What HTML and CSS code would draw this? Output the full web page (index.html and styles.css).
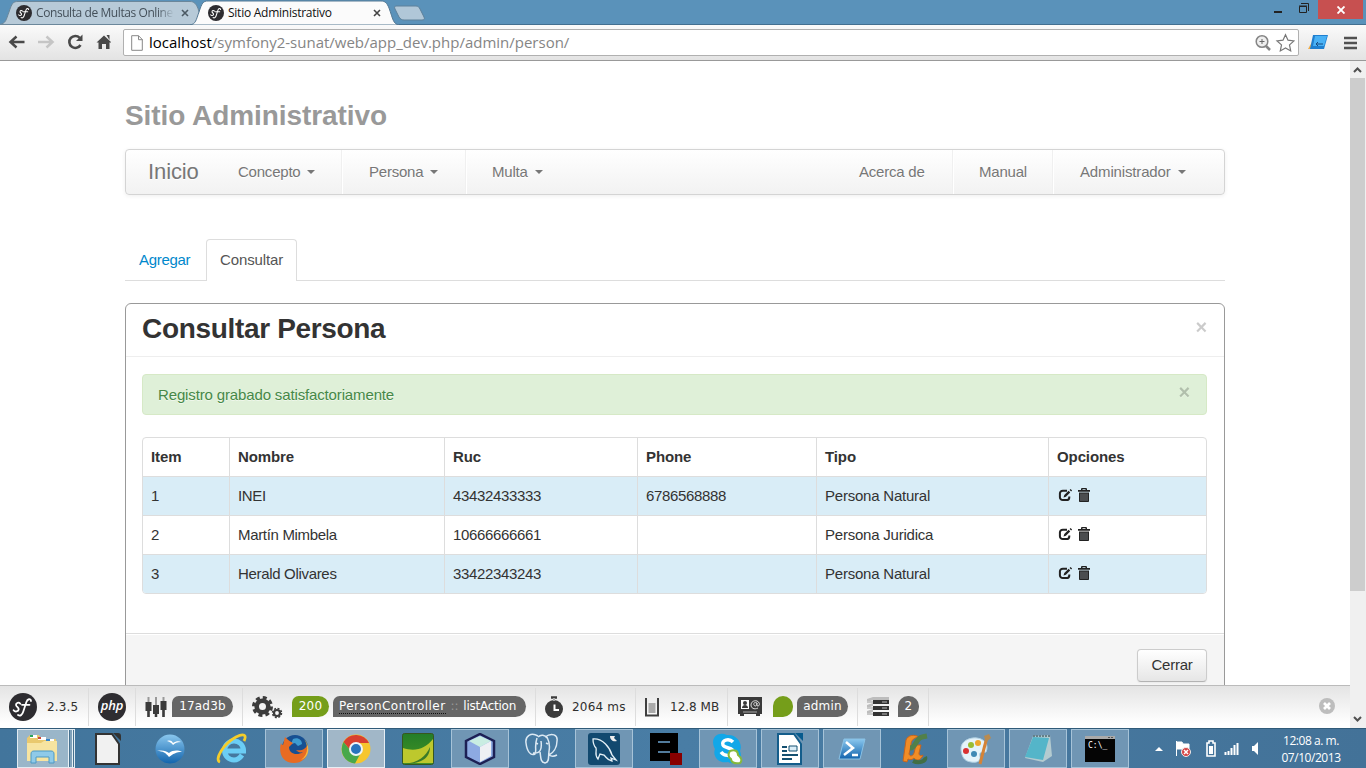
FILE: index.html
```html
<!DOCTYPE html>
<html lang="es">
<head>
<meta charset="utf-8">
<title>Sitio Administrativo</title>
<link rel="stylesheet" href="styles.css">
</head>
<body>
<svg width="0" height="0" class="defs">
  <defs>
    <g id="sf"><circle cx="14" cy="14" r="14" fill="#2d2c30"/><path d="M11.300 10.800C9.800 8.800 6.800 9.800 7 12c.2 2 3.100 2.300 2.700 4.500-.4 2.300-3.700 2.700-5.100.7M22 8c-.4-2.800-3.500-2.200-4.600 1l-3.200 9.800c-1 3.200-3 4.600-5.200 3.200M13 11.800h7.500" fill="none" stroke="#fff" stroke-width="1.800" stroke-linecap="round"/></g>
    <g id="edit"><path d="M9 2.700H4.800A2.900 2.900 0 0 0 1.900 5.600v3.600a2.900 2.900 0 0 0 2.900 2.900h3.600a2.900 2.900 0 0 0 2.900-2.900V8.500" fill="none" stroke="#222" stroke-width="2"/><path d="M5.500 9.500l.8-2.400L10.600 2.800l1.600 1.600-4.300 4.300zM11.600 1.900l1-1 1.500 1.500-1 1z" fill="#222"/></g>
    <g id="trash"><path d="M3.500 2V1.200C3.500.4 4 0 4.800 0h3.400c.8 0 1.300.4 1.300 1.200V2h3v1.800H.5V2zM5 2h3V1.200H5zM1.500 4.500h10v8.800c0 .5-.3.700-.8.700H2.300c-.5 0-.8-.2-.8-.7z" fill="#222"/><path d="M3.500 5.500v7.500M5.500 5.500v7.500M7.500 5.500v7.500M9.500 5.500v7.500" stroke="#8c9194" stroke-width=".8"/></g>
    <linearGradient id="blue" x2="0" y2="1"><stop stop-color="#8ac7ee"/><stop offset="1" stop-color="#1264ad"/></linearGradient>
    <linearGradient id="green" x2="0" y2="1"><stop stop-color="#247d28"/><stop offset="1" stop-color="#459324"/></linearGradient>
  </defs>
</svg>

<header class="titlebar">
  <svg class="tab-shapes" width="430" height="25" viewBox="0 0 430 25">
    <path d="M0 24.500C6 23 6 20 9 12 12 3 13 1.500 18 1.500H190c4 0 6 2 8 7l5 16z" fill="#b7cad8" stroke="#6b879b"/>
    <path d="M190 25c6-1 6-5 9-13 3-9 4-11 9-11H381c4 0 6 2 8 7 4 11 4 16 10 17z" fill="#fbfbfb" stroke="#547893"/>
    <path d="M396 6h20c2 0 3 1 4 3l4 8c1 2 0 3-2 3h-18c-2 0-4-1-5-3l-4-8c-1-2 0-3 1-3z" fill="#b0c7d8" stroke="#5d809a"/>
  </svg>
  <div class="tabs">
    <div class="tab tab-one"><svg width="16" height="16" viewBox="0 0 28 28"><use href="#sf"/></svg><span>Consulta de Multas Online</span><svg class="tab-x" width="8" height="8"><path d="M1 1l6 6M7 1l-6 6" stroke="#4b5963" stroke-width="1.600"/></svg></div>
    <div class="tab tab-two"><svg width="16" height="16" viewBox="0 0 28 28"><use href="#sf"/></svg><span>Sitio Administrativo</span><svg class="tab-x" width="8" height="8"><path d="M1 1l6 6M7 1l-6 6" stroke="#444" stroke-width="1.600"/></svg></div>
  </div>
  <div class="window-buttons">
    <svg width="44" height="19"><path d="M0 12h8" stroke="#222" stroke-width="2"/><path d="M25.500 6.500h7v6h-7zM27 3.500h7.500V11M25 6h8" fill="none" stroke="#222"/></svg>
    <div class="close"><svg width="8" height="8"><path d="M.5.500l7 7M7.500.500l-7 7" stroke="#fff" stroke-width="1.900"/></svg></div>
  </div>
</header>

<div class="browser-bar">
  <svg class="nav-icons" width="110" height="20" viewBox="0 0 110 20">
    <path d="M25 10H11.500M17 4.500L11 10l6 5.500" fill="none" stroke="#494949" stroke-width="2.500"/>
    <path d="M38.500 10H52M47 4.500L53 10l-6 5.500" fill="none" stroke="#c5c5c5" stroke-width="2.500"/>
    <path d="M81 13a6 6 0 1 1-.8-7.200" fill="none" stroke="#494949" stroke-width="2.600"/><path d="M83 2.500V9h-6.500z" fill="#494949"/>
    <path d="M97 10.500l7.500-7 7.500 7h-2V17h-3.500v-5h-4v5H99v-6.500zM107 3h3v5z" fill="#494949"/>
  </svg>
  <div class="address">
    <svg width="12" height="16"><path d="M.7.700h6.800l3.800 3.800v10.800H.7zM7.500.700v4h4" fill="#fff" stroke="#888"/></svg>
    <span class="url"><b>localhost</b>/symfony2-sunat/web/app_dev.php/admin/person/</span>
    <svg width="40" height="20"><circle cx="7" cy="8.500" r="5.800" fill="#eee" stroke="#858585" stroke-width="1.500"/><path d="M4.500 8.500h5M7 6v5" stroke="#666"/><path d="M11 13l4 4" stroke="#858585" stroke-width="2.500"/><path d="M30.500 1.700l2.500 5.500 6 .7-4.500 4 1.200 6-5.200-3-5.200 3 1.200-6-4.500-4 6-.7z" fill="#fff" stroke="#777" stroke-width="1.200"/></svg>
  </div>
  <svg class="extension" width="20" height="17"><path d="M0 15l4-7 2 7z" fill="#f0ad48"/><path d="M5 1h15l-4 14H2z" fill="#1e7fd0"/><path d="M7 2h12l-3 10H5z" fill="#49b1f5"/><path d="M8 10h7M10 8l-2 2 2 2" fill="none" stroke="#174b80"/></svg>
  <svg class="menu" width="13" height="14"><path d="M0 2h13M0 7h13M0 12h13" stroke="#515151" stroke-width="2.600"/></svg>
</div>

<div class="view">
  <div class="document">
    <main class="page">
      <div class="container">
        <h1>Sitio Administrativo</h1>
        <nav class="navbar">
          <a class="brand">Inicio</a>
          <a class="concept">Concepto <i class="caret"></i></a>
          <a class="person">Persona <i class="caret"></i></a>
          <a class="fine">Multa <i class="caret"></i></a>
          <a class="about">Acerca de</a>
          <a class="manual">Manual</a>
          <a class="account">Administrador <i class="caret"></i></a>
        </nav>
        <div class="page-tabs"><a>Agregar</a><a class="active">Consultar</a></div>
        <section class="modal">
          <div class="modal-header"><h2>Consultar Persona</h2><button class="dismiss">×</button></div>
          <div class="modal-body">
            <div class="alert"><span>Registro grabado satisfactoriamente</span><button class="dismiss">×</button></div>
            <table>
              <colgroup><col class="c1"><col class="c2"><col class="c3"><col class="c4"><col class="c5"><col class="c6"></colgroup>
              <thead><tr><th>Item</th><th>Nombre</th><th>Ruc</th><th>Phone</th><th>Tipo</th><th>Opciones</th></tr></thead>
              <tbody>
                <tr class="info"><td>1</td><td>INEI</td><td class="num">43432433333</td><td class="num">6786568888</td><td>Persona Natural</td><td><svg class="actions" width="34" height="14"><use href="#edit"/><use href="#trash" x="19.500"/></svg></td></tr>
                <tr><td>2</td><td>Martín Mimbela</td><td class="num">10666666661</td><td></td><td>Persona Juridica</td><td><svg class="actions" width="34" height="14"><use href="#edit"/><use href="#trash" x="19.500"/></svg></td></tr>
                <tr class="info"><td>3</td><td>Herald Olivares</td><td class="num">33422343243</td><td></td><td>Persona Natural</td><td><svg class="actions" width="34" height="14"><use href="#edit"/><use href="#trash" x="19.500"/></svg></td></tr>
              </tbody>
            </table>
          </div>
          <div class="modal-footer"><button class="btn">Cerrar</button></div>
        </section>
      </div>
    </main>
    <div class="debug">
      <div class="block b1"><svg width="28" height="28"><use href="#sf"/></svg><span>2.3.5</span></div>
      <div class="block b2"><div class="php">php</div></div>
      <div class="block b3"><svg width="22" height="22"><path d="M3.500 1v20M11 1v20M18.500 1v20" stroke="#999" stroke-width="2"/><path d="M.5 6h6v9h-6zM8 9h6v9H8zM15.500 5h6v9h-6z" fill="#3b3b3b"/><path d="M3.500 14v7M11 17v4M18.500 14v7" stroke="#3b3b3b" stroke-width="2.500"/></svg><span class="pill">17ad3b</span></div>
      <div class="block b4"><svg width="31" height="23"><circle cx="10.500" cy="10.500" r="5.800" fill="none" stroke="#3c3c3c" stroke-width="4.600"/><circle cx="10.500" cy="10.500" r="9" fill="none" stroke="#3c3c3c" stroke-width="3" stroke-dasharray="4 3.070"/><circle cx="25" cy="17" r="3" fill="none" stroke="#3c3c3c" stroke-width="2.200"/><circle cx="25" cy="17" r="4.500" fill="none" stroke="#3c3c3c" stroke-width="1.500" stroke-dasharray="2 1.530"/></svg><span class="pill ok">200</span><span class="pill controller"><u>PersonController</u> <em>::</em> <s>listAction</s></span></div>
      <div class="block b5"><svg width="18" height="22"><circle cx="9" cy="13" r="9" fill="#3c3c3c"/><path d="M6 1.500h6" stroke="#3c3c3c" stroke-width="2.500"/><path d="M9 2v3" stroke="#aaa" stroke-width="2"/><path d="M9.500 8.500v5.500h4.500" stroke="#fff" stroke-width="2" fill="none"/></svg><span>2064 ms</span></div>
      <div class="block b6"><svg width="14" height="20"><path d="M1 1v17.500h12V1" fill="none" stroke="#404040" stroke-width="2"/><path d="M3.500 6h7v10h-7z" fill="#aaa"/></svg><span>12.8 MB</span></div>
      <div class="block b7"><svg width="24" height="20"><path d="M0 0h24v17h-2v2h-4v-2H6v2H2v-2H0z" fill="#3a3a3a"/><path d="M3 3h8v9H3z" fill="#fff"/><circle cx="7" cy="6" r="2" fill="#3a3a3a"/><path d="M4 11c0-4 6-4 6 0" fill="#3a3a3a"/><path d="M20 11c-4 2-7 0-7-3s3-5 6-4c3 1 3 5 1 5s-1-2-1-3c-2-1-4 0-3 2s3 1 3-2" fill="none" stroke="#ddd"/><path d="M5 15h14" stroke="#aaa"/></svg><span class="pill ok empty"></span><span class="pill admin">admin</span></div>
      <div class="block b8"><svg width="22" height="20"><path d="M0 2l6-2h16v3H6L0 5zM0 8l6-2v3l-6 2zM0 14l6-2v3l-6 2z" fill="#bdbdbd"/><path d="M6 3h16v4H6zM6 9h16v4H6zM6 15h16v4H6z" fill="#333"/><path d="M0 4h6v2H0zM0 10h6v2H0zM0 16h6v2H0z" fill="#c8c8c8"/><path d="M15 5h5M15 11h5M15 17h5" stroke="#bbb"/></svg><span class="pill count">2</span></div>
      <svg class="debug-close" width="16" height="16"><circle cx="8" cy="8" r="8" fill="#bdbdbd"/><path d="M5 5l6 6M11 5l-6 6" stroke="#fff" stroke-width="2.700"/></svg>
    </div>
  </div>
  <div class="scrollbar">
    <svg width="16" height="17"><path d="M4 11l3.500-3.500L11 11" fill="none" stroke="#505050" stroke-width="2"/></svg>
    <div class="thumb"></div>
    <svg class="down" width="16" height="17"><path d="M4 6l3.500 3.500L11 6" fill="none" stroke="#505050" stroke-width="2"/></svg>
  </div>
</div>

<footer class="taskbar">
  <div class="apps">
    <div class="app explorer"><svg width="32" height="32" viewBox="0 0 32 32"><path d="M1 5l3-3h9l2 4h15l1 22H1z" fill="#e9c96e"/><path d="M4 2h7v3H4zM12 4h8v3h-8zM20 6h8v3h-8z" fill="#fff"/><path d="M4 2h3v2H4z" fill="#2aa65b"/><path d="M12 4h3v2h-3z" fill="#cc493b"/><path d="M20 6h4v2h-4z" fill="#3785cb"/><path d="M1 10h14l3-2h13v20H1z" fill="#f7e4a0"/><path d="M5 30v-9c0-2 1-3 3-3h17c2 0 3 1 3 3v9h-5v-6H10v6z" fill="#8fcae8" stroke="#4c99c4"/></svg></div>
    <div class="app"><svg width="28" height="32"><path d="M2 1h16l7 10v20H2z" fill="#f1f1f1" stroke="#333" stroke-width="2"/><path d="M19 0h5q3 0 3 3v5z" fill="#333"/></svg></div>
    <div class="app"><svg width="30" height="30"><circle cx="15" cy="15" r="14.500" fill="url(#blue)"/><path d="M12 7c4-1 5 0 6 2 3-2 6-2 8-1-4 0-6 1-8 3-1-2-3-3-6-4zM2 17c6-1 9 0 12 2 4-3 9-3 13-1-6 0-9 2-13 5-3-4-6-6-12-6z" fill="#fff"/></svg></div>
    <div class="app"><svg width="32" height="32"><path d="M26 22c-2 3-5 5-8 5a9.500 9.500 0 1 1 9.500-10v1H10" fill="none" stroke="#6bcdf5" stroke-width="5"/><path d="M4 29C-2 27 7 11 20 4c8-4 11-2 8 4" fill="none" stroke="#f5cd2b" stroke-width="2.800"/></svg></div>
    <div class="app open"><svg width="30" height="30"><circle cx="16" cy="14" r="13" fill="#175092"/><path d="M14 5c5-2 9 1 9 5l-4 2-3-3-4 1z" fill="#3d9bd0"/><path d="M28 11c3 11-4 18-13 18C4 29-1 20 2 9c0 1 1 2 2 2L6 3c2 2 4 4 8 6l-4 4c0 7 8 9 14 5-3 1-5 0-7-2 6 1 10-1 11-5" fill="#e86b22"/><path d="M25 5c5 7 4 16-3 21 8-3 10-13 3-21" fill="#f7b83e"/></svg></div>
    <div class="app open selected"><svg width="30" height="30"><circle cx="15" cy="15" r="14.500" fill="#f6c62d"/><path d="M2.500 8A14.500 14.500 0 0 1 28 9H15l-6 7z" fill="#d84030"/><path d="M2.500 8A14.500 14.500 0 0 0 14 29.500l6-11-8 1z" fill="#48a84b"/><circle cx="15" cy="15" r="6" fill="#2874bd" stroke="#eef4f7" stroke-width="2"/></svg></div>
    <div class="app"><svg width="32" height="32"><rect x=".5" y=".5" width="31" height="31" rx="2" fill="url(#green)" stroke="#37571e"/><path d="M1 15c12 4 22 1 30-9v24H1z" fill="#bdc82d"/><path d="M1 31c16-1 23-8 27-17 0 12-10 17-27 17z" fill="#397a28"/></svg></div>
    <div class="app open"><svg width="32" height="32"><path d="M16 1l14 7v16l-14 7-14-7V8z" fill="#8daae2" stroke="#1d2054" stroke-width="2.500"/><path d="M16 3l11 5-11 6L5 8z" fill="#c9ede2"/><path d="M16 14l11-6v15l-11 6z" fill="#eef0f4"/></svg></div>
    <div class="app"><svg width="34" height="32"><path d="M13 3C6-1 0 3 1 10c1 9 5 13 9 11 2-4-1-7 2-16M8 20c8 1 9-5 8-12M20 4c7-5 13-2 12 4 0 7-4 12-8 14-1-5 3-8-2-18m2 18c3 2 6 1 8 0M13 4c3-3 7-2 9 1M15 19c1 5 0 10 5 11 5-1 3-7 4-11M11 10l2 1M21 10l2 1" fill="none" stroke="#dce9f3" stroke-width="1.500"/></svg></div>
    <div class="app open"><svg width="32" height="32"><rect width="32" height="32" rx="3" fill="#12496f"/><path d="M28 27l-4-5c-2-7-9-17-19-16 0 4 1 7 3 9 1 4-2 6 2 11l2-5 4 1c3 3 3 5 8 6l-1-3z" fill="none" stroke="#e6f1f7" stroke-width="1.300"/><path d="M22 3c0 4 3 6 7 5l-3-3 1-2z" fill="#eee"/></svg></div>
    <div class="app"><svg width="32" height="32"><path d="M0 0h28v20h-8v8H0z" fill="#000"/><path d="M8 9h12M8 19h12" stroke="#527c9d" stroke-width="2"/><path d="M20 20h12v12H20z" fill="#800"/></svg></div>
    <div class="app open"><svg width="32" height="32"><path d="M3 16C-3 5 6-2 15 2c11-1 16 10 13 16 4 10-6 15-12 11C7 31 0 23 3 16z" fill="#12a7e8"/><path d="M21 9c-4-4-12-2-10 3 2 4 11 2 10 7-2 5-9 4-12 0" fill="none" stroke="#fff" stroke-width="3.500"/><path d="M18 18c5-2 8 0 8 4 4 3 4 6 2 8-6 1-9-1-9-4-3-2-3-5-1-8z" fill="#fff" stroke="#85b83d" stroke-width="2"/></svg></div>
    <div class="app open"><svg width="28" height="32"><path d="M2 1h16l7 10v20H2z" fill="#fff" stroke="#145d8b" stroke-width="2"/><path d="M19 0h8v8z" fill="#075b8e"/><path d="M6 14h5M6 18h5M6 22h16M6 26h10" stroke="#155071" stroke-width="2"/><path d="M13 13h8v5h-8z" fill="#d9edf8" stroke="#145070"/></svg></div>
    <div class="app open"><svg width="28" height="22"><path d="M6 1h21l-5 20H1z" fill="url(#blue)" stroke="#8ac2e5"/><path d="M8 4l7 6-9 7M14 17h6" fill="none" stroke="#fff" stroke-width="2.500"/></svg></div>
    <div class="app"><svg width="32" height="32"><path d="M5 28L8 7C10 2 16 1 21 4c-7 1-8 5-8 8L11 21c1 3 4 2 5-1l2-8h5l-2 8c0 3 2 3 4 2-2 6-7 6-9 3-2 2-4 2-6 1l-1 3z" fill="#f18c26" stroke="#c6651d"/><path d="M12 15c6 0 6-10 12-11l5-1" fill="none" stroke="#52804a" stroke-width="5"/><path d="M15 28c6 3 14 0 12-4" fill="none" stroke="#416f45" stroke-width="4"/></svg></div>
    <div class="app open"><svg width="32" height="32"><path d="M1 17C0 8 10 4 17 5c8 1 12 7 9 14-5 1-7-1-6 5 1 4-3 6-9 5C4 28 2 24 1 17z" fill="#e5f3fa" stroke="#b2d2e4"/><circle cx="6" cy="18" r="3" fill="#d93132"/><circle cx="11" cy="12" r="3" fill="#99bd32"/><circle cx="18" cy="10" r="3" fill="#eea72c"/><circle cx="14" cy="21" r="3" fill="#4089b4"/><path d="M27 4L20 31" stroke="#d58337" stroke-width="3"/><path d="M24 3l5-2 2 4-5 4z" fill="#b98b50"/></svg></div>
    <div class="app open"><svg width="30" height="30"><path d="M10 2l17-1 2 21-9 6-18-4z" fill="#b4cbd0"/><path d="M10 3l16 1-6 22-18-3z" fill="#54b5c9"/><path d="M10 2h17" stroke="#667f88" stroke-width="2" stroke-dasharray="2 1"/></svg></div>
    <div class="app open"><svg class="console" width="30" height="26"><path d="M0 0h30v26H0z" fill="#050505"/><path d="M0 0h30v3H0z" fill="#aaa"/><path d="M23 1.500h2M26 1.500h2" stroke="#555"/><text x="3" y="12">C:\_</text></svg></div>
  </div>
  <svg class="tray" width="104" height="20"><path d="M1 12l4-4 4 4z" fill="#fff"/><path d="M22.500 2v15M23 3h5l1 2h6v7h-6l-1-2h-5" fill="#fff" stroke="#fff"/><circle cx="32" cy="13" r="4.500" fill="#d54343" stroke="#eee"/><path d="M30 11l4 4M34 11l-4 4" stroke="#fff" stroke-width="1.500"/><path d="M53 4h2V2h4v2h2v13h-8z" fill="none" stroke="#fff" stroke-width="1.600"/><path d="M55 7h4v8h-4z" fill="#fff"/><path d="M71.500 16v-3M74.500 16v-4M77.500 16V9M80.500 16V6M83.500 16V4" stroke="#fff" stroke-width="2"/><path d="M98 7h2l5-5v15l-5-5h-2z" fill="#fff"/></svg>
  <div class="clock">12:08 a. m.<br>07/10/2013</div>
</footer>
</body>
</html>
```
FILE: styles.css
```css
* { box-sizing: border-box; }
body { width: 1366px; height: 768px; margin: 0; overflow: hidden; display: flex; flex-direction: column; background: #fff; color: #333; font: 15px/22px "Liberation Sans", Arial, sans-serif; letter-spacing: -.22px; }
button { font: inherit; letter-spacing: inherit; padding: 0; }
svg { display: block; flex: none; }
.defs { position: absolute; }
.titlebar { height: 25px; flex: none; background: #5a92ba; display: flex; position: relative; border-bottom: 1px solid #426f90; }
.tab-shapes { position: absolute; left: 0; top: 0; }
.tabs { display: flex; position: relative; width: 600px; }
.tab { display: flex; align-items: center; height: 26px; color: #44505a; font: 12px/20px "Open Sans", sans-serif; letter-spacing: -.15px; }
.tab-one { width: 192px; padding-left: 16px; letter-spacing: -.42px; }
.tab-two { padding-left: 16px; color: #111; letter-spacing: -.25px; }
.tab span { margin-left: 4px; width: 138px; white-space: nowrap; }
.tab-one span { -webkit-mask-image: linear-gradient(90deg, #000 88%, transparent); }
.tab-x { margin-left: 7px; }
.tab-two .tab-x { margin-left: 11px; }
.tab-two span { width: 134px; }
.window-buttons { display: flex; margin-left: auto; padding-right: 3px; }
.close { width: 45px; height: 19px; background: #c75050; display: flex; align-items: center; justify-content: center; }
.browser-bar { height: 36px; flex: none; display: flex; align-items: center; background: linear-gradient(#fafafa, #e3e3e3); border-bottom: 1px solid #999; }
.nav-icons { width: 113px; margin: 0 12px 1px -2px; }
.address { width: 1176px; height: 27px; display: flex; align-items: center; border: 1px solid #b0b0b0; border-radius: 2px; background: #fff; padding: 0 3px 0 7px; }
.url { flex: 1; margin: -2px 0 0 6px; color: #858585; font: 15px/22px "Open Sans", sans-serif; letter-spacing: 0; }
.url b { font-weight: 400; color: #000; }
.extension { margin-left: 9px; }
.menu { margin-left: 16px; }
.view { height: 667px; flex: none; display: flex; }
.document { width: 1350px; }
.page { height: 624px; overflow: hidden; }
.container { width: 1100px; margin-left: 125px; }
h1, h2 { margin: 0; font-size: 28px; line-height: 44px; letter-spacing: -.07px; }
h1 { color: #999; padding-top: 33px; height: 88px; }
.navbar { height: 46px; display: flex; align-items: center; border: 1px solid #d4d4d4; border-radius: 4px; background: linear-gradient(#fff, #f2f2f2); box-shadow: 0 1px 4px rgba(0,0,0,.065); color: #777; text-shadow: 0 1px 0 #fff; }
.navbar a { height: 44px; line-height: 44px; white-space: nowrap; }
.caret { display: inline-block; margin-left: 3px; border: 4px solid transparent; border-top-color: #777; border-bottom: 0; vertical-align: 3px; }
.navbar .brand { width: 99px; padding-left: 22px; font-size: 22px; letter-spacing: -.1px; }
.concept { width: 117px; padding-left: 13px; border-right: 1px solid #f0f0f0; }
.person { width: 124px; padding-left: 26px; border-left: 1px solid #fff; border-right: 1px solid #f0f0f0; }
.fine { padding-left: 25px; border-left: 1px solid #fff; }
.about { margin-left: auto; width: 93px; }
.manual { width: 100px; padding-left: 26px; border-left: 1px solid #f0f0f0; box-shadow: inset 1px 0 #fff; }
.account { width: 172px; padding-left: 27px; border-left: 1px solid #f0f0f0; box-shadow: inset 1px 0 #fff; }
.navbar .account { letter-spacing: -.15px; }
.page-tabs { margin-top: 44px; height: 42px; display: flex; border-bottom: 1px solid #ddd; color: #08c; }
.page-tabs a { width: 81px; padding: 10px 14px; letter-spacing: -.3px; }
.page-tabs .active { width: 91px; height: 42px; color: #555; padding: 9px 13px; background: #fff; border: 1px solid #ddd; border-bottom: 0; border-radius: 4px 4px 0 0; letter-spacing: -.13px; }
.modal { margin-top: 22px; height: 400px; border: 1px solid #999; border-radius: 6px; }
.modal-header { height: 53px; padding: 3px 17px 0 16px; display: flex; justify-content: space-between; border-bottom: 1px solid #eee; }
h2 { letter-spacing: -.33px; }
.dismiss { height: 22px; border: 0; background: none; color: #000; opacity: .2; font-size: 20px; line-height: 22px; font-weight: 700; text-shadow: 0 1px 0 #fff; }
.modal-header .dismiss { margin-top: 9px; }
.modal-body { height: 276px; padding: 17px 17px 0 16px; }
.alert { height: 41px; display: flex; justify-content: space-between; align-items: center; padding: 0 15px; border: 1px solid #d6e9c6; border-radius: 4px; background: #dff0d8; color: #468847; text-shadow: 0 1px 0 rgba(255,255,255,.5); letter-spacing: -.14px; }
.alert .dismiss { margin-top: -5px; margin-right: 1px; }
table { width: 1065px; margin-top: 22px; table-layout: fixed; border: 1px solid #ddd; border-radius: 4px; border-spacing: 0; overflow: hidden; }
.c1 { width: 86px; } .c2 { width: 215px; } .c3 { width: 193px; } .c4 { width: 179px; } .c5 { width: 232px; } .c6 { width: 158px; }
th, td { height: 39px; padding: 0 8px; text-align: left; border-left: 1px solid #ddd; border-top: 1px solid #ddd; }
th { height: 38px; border-top: 0; letter-spacing: -.1px; }
th:first-child, td:first-child { border-left: 0; }
td:nth-child(2) { letter-spacing: -.32px; }
.info td { background: #d9edf7; }
td.num { letter-spacing: -.34px; }
.actions { margin: -2px 0 0 1px; }
.modal-footer { height: 80px; padding: 15px 17px; border-top: 1px solid #ddd; box-shadow: inset 0 1px #fff; background: #f5f5f5; text-align: right; }
.btn { width: 70px; height: 33px; border: 1px solid #ccc; border-bottom-color: #b3b3b3; border-radius: 4px; background: linear-gradient(#fff, #e6e6e6); color: #333; padding-bottom: 2px; box-shadow: 0 1px 2px rgba(0,0,0,.05); }
.debug { height: 43px; display: flex; align-items: center; border-top: 1px solid #bbb; background: linear-gradient(#e4e4e4, #fff 90%); color: #2f2f2f; font: 12px/20px "DejaVu Sans", Verdana, sans-serif; letter-spacing: 0; }
.block { height: 38px; display: flex; align-items: center; border-right: 1px solid #ddd; white-space: nowrap; }
.b1 { width: 89px; padding-left: 9px; } .b1 span { margin-left: 10px; letter-spacing: .15px; }
.b1 svg, .php { margin-top: -1px; }
.b2 { width: 47px; padding-left: 9px; } .php { width: 28px; height: 28px; border-radius: 14px; background: #2e2d31; color: #fff; text-align: center; font: italic 600 13px/25px "Open Sans", sans-serif; letter-spacing: -.2px; }
.b3 { width: 107px; padding-left: 9px; }
.b4 { width: 293px; padding-left: 9px; }
.b5 { width: 100px; padding-left: 9px; } .b5 span { margin-left: 9px; letter-spacing: .2px; }
.b6 { width: 92px; padding-left: 9px; } .b6 span { margin-left: 11px; }
.b7 { width: 130px; padding-left: 10px; }
.b8 { width: 71px; padding-left: 9px; }
.pill { height: 21px; margin: -1px 0 0 5px; width: 61px; text-align: center; border-radius: 7px 11px 11px 0; background: #666; color: #fff; line-height: 21px; letter-spacing: .2px; }
.pill.ok { width: 37px; margin-left: 9px; background: #759e1a; }
.pill.controller { width: 193px; margin-left: 4px; letter-spacing: 0; word-spacing: 1px; padding-right: 4px; }
.controller u { display: inline-block; height: 18px; text-decoration: none; border-bottom: 1px dotted #111; letter-spacing: .45px; }
.controller em { color: #999; font-style: normal; }
.controller s { text-decoration: none; letter-spacing: -.25px; }
.pill.empty { width: 20px; margin-left: 11px; border-radius: 10px 10px 10px 0; }
.pill.admin { width: 51px; margin-left: 4px; }
.pill.count { width: 21px; margin-left: 9px; border-radius: 10px 10px 10px 0; }
.debug-close { margin: -2px 15px 0 auto; }
.scrollbar { width: 16px; background: #f0f0f0; display: flex; flex-direction: column; }
.thumb { width: 15px; height: 513px; background: #cdcdcd; }
.scrollbar .down { margin-top: auto; }
.taskbar { height: 40px; flex: none; display: flex; background: linear-gradient(90deg, #42759c, #497da5 50%, #437298); border-top: 1px solid #315b79; }
.apps { display: flex; gap: 4px; margin-left: 17px; width: 1124px; flex: none; }
.app { width: 58px; height: 39px; display: flex; align-items: center; justify-content: center; }
.open { background: #7096b4; border: 1px solid #a6c3d8; }
.selected { background: #a1b7c8; border-color: #e6eef4; }
.explorer { padding-right: 8px; background: linear-gradient(90deg, #9ab6c9 50px, #e8f1f6 50px 51px, #47718f 51px 52px, #7fa1ba 52px 54px, #e8f1f6 54px 55px, #47718f 55px 56px, #7fa1ba 56px); border: 1px solid #e1ebf2; }
.console text { fill: #fff; font: 8px "DejaVu Sans Mono", monospace; letter-spacing: 0; }
.tray { margin: 10px 0 0 13px; }
.clock { margin-left: 12px; width: 82px; padding-top: 3px; text-align: center; color: #fff; font: 12px/17px "Open Sans", sans-serif; letter-spacing: -.45px; }
```
